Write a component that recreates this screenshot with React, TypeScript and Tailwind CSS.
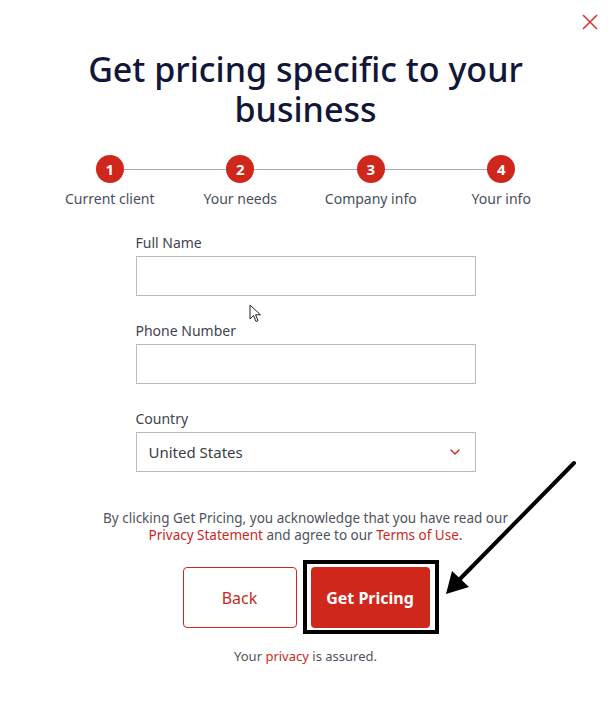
import { ChevronDown } from 'lucide-react';

const STEPS = ['Current client', 'Your needs', 'Company info', 'Your info'];

function Field({ label, children }: { label: string; children?: React.ReactNode }) {
  return (
    <div className="flex flex-col">
      <label className="text-[14px] leading-[18px] text-[#3f4350] mb-[4px]">{label}</label>
      <div className="h-[40px] border border-[#b9b9bd] bg-white flex items-center px-[12px]">{children}</div>
    </div>
  );
}

export default function App() {
  return (
    <div
      className="relative w-[611px] h-[704px] bg-white overflow-hidden"
      style={{ fontFamily: '"Noto Sans", "Open Sans", sans-serif' }}
    >
      {/* close */}
      <button className="absolute right-[12px] top-[13px] w-[18px] h-[18px]" aria-label="Close">
        <svg viewBox="0 0 18 18" width="18" height="18">
          <path d="M2 2 L16 16 M16 2 L2 16" stroke="#d7372b" strokeWidth="1.6" fill="none" />
        </svg>
      </button>

      <div className="flex flex-col items-center pt-[49px]">
        <h1 className="text-[34px] leading-[40px] font-medium text-[#121638] text-center w-[450px]">
          Get pricing specific to your business
        </h1>

        {/* stepper */}
        <div className="relative mt-[26px] w-[522px] grid grid-cols-4">
          <div className="absolute left-[65px] right-[65px] top-[14px] h-px bg-[#a7a9b0]" />
          {STEPS.map((s, i) => (
            <div key={s} className="relative flex flex-col items-center">
              <div className="w-[28px] h-[28px] rounded-full bg-[#d0271d] text-white text-[15px] font-bold flex items-center justify-center">
                {i + 1}
              </div>
              <div className="mt-[7px] text-[14px] leading-[18px] text-[#4a4e5c]">{s}</div>
            </div>
          ))}
        </div>

        {/* form */}
        <div className="w-[340px] mt-[26px] flex flex-col gap-[26px]">
          <Field label="Full Name" />
          <Field label="Phone Number" />
          <Field label="Country">
            <span className="text-[15px] text-[#3a3d48] flex-1">United States</span>
            <ChevronDown size={16} color="#d0271d" strokeWidth={2} />
          </Field>
        </div>

        <p className="mt-[38px] text-[13.5px] leading-[17px] text-[#4f525c] text-center w-[440px]">
          By clicking Get Pricing, you acknowledge that you have read our{' '}
          <span className="text-[#c8281e]">Privacy Statement</span> and agree to our{' '}
          <span className="text-[#c8281e]">Terms of Use</span>.
        </p>

        <div className="mt-[23px] flex gap-[14px] pl-[1px]">
          <button className="w-[114px] h-[61px] border border-[#d0271d] rounded-[4px] text-[#c8281e] text-[16px]">
            Back
          </button>
          <div className="relative">
            <button className="w-[119px] h-[61px] bg-[#d0271d] rounded-[4px] text-white text-[16px] font-bold">
              Get Pricing
            </button>
            <div className="absolute left-[-8px] right-[-9px] top-[-7px] bottom-[-6px] border-[4px] border-black" />
          </div>
        </div>

        <p className="mt-[20px] text-[13px] leading-[17px] text-[#4f525c]">
          Your <span className="text-[#c8281e]">privacy</span> is assured.
        </p>
      </div>

      {/* mouse cursor */}
      <svg className="absolute left-[249px] top-[304px]" width="14" height="20" viewBox="0 0 14 20">
        <path d="M1 1 L1 15 L4.5 11.5 L7 17.5 L9 16.7 L6.6 10.8 L11.5 10.8 Z" fill="white" stroke="#222" strokeWidth="1" strokeLinejoin="round" />
      </svg>

      {/* annotation arrow */}
      <svg className="absolute left-0 top-0 pointer-events-none" width="611" height="704">
        <line x1="574" y1="463" x2="458" y2="581" stroke="#000" strokeWidth="4" strokeLinecap="round" />
        <polygon points="446,594 452,571 469,587" fill="#000" />
      </svg>
    </div>
  );
}
